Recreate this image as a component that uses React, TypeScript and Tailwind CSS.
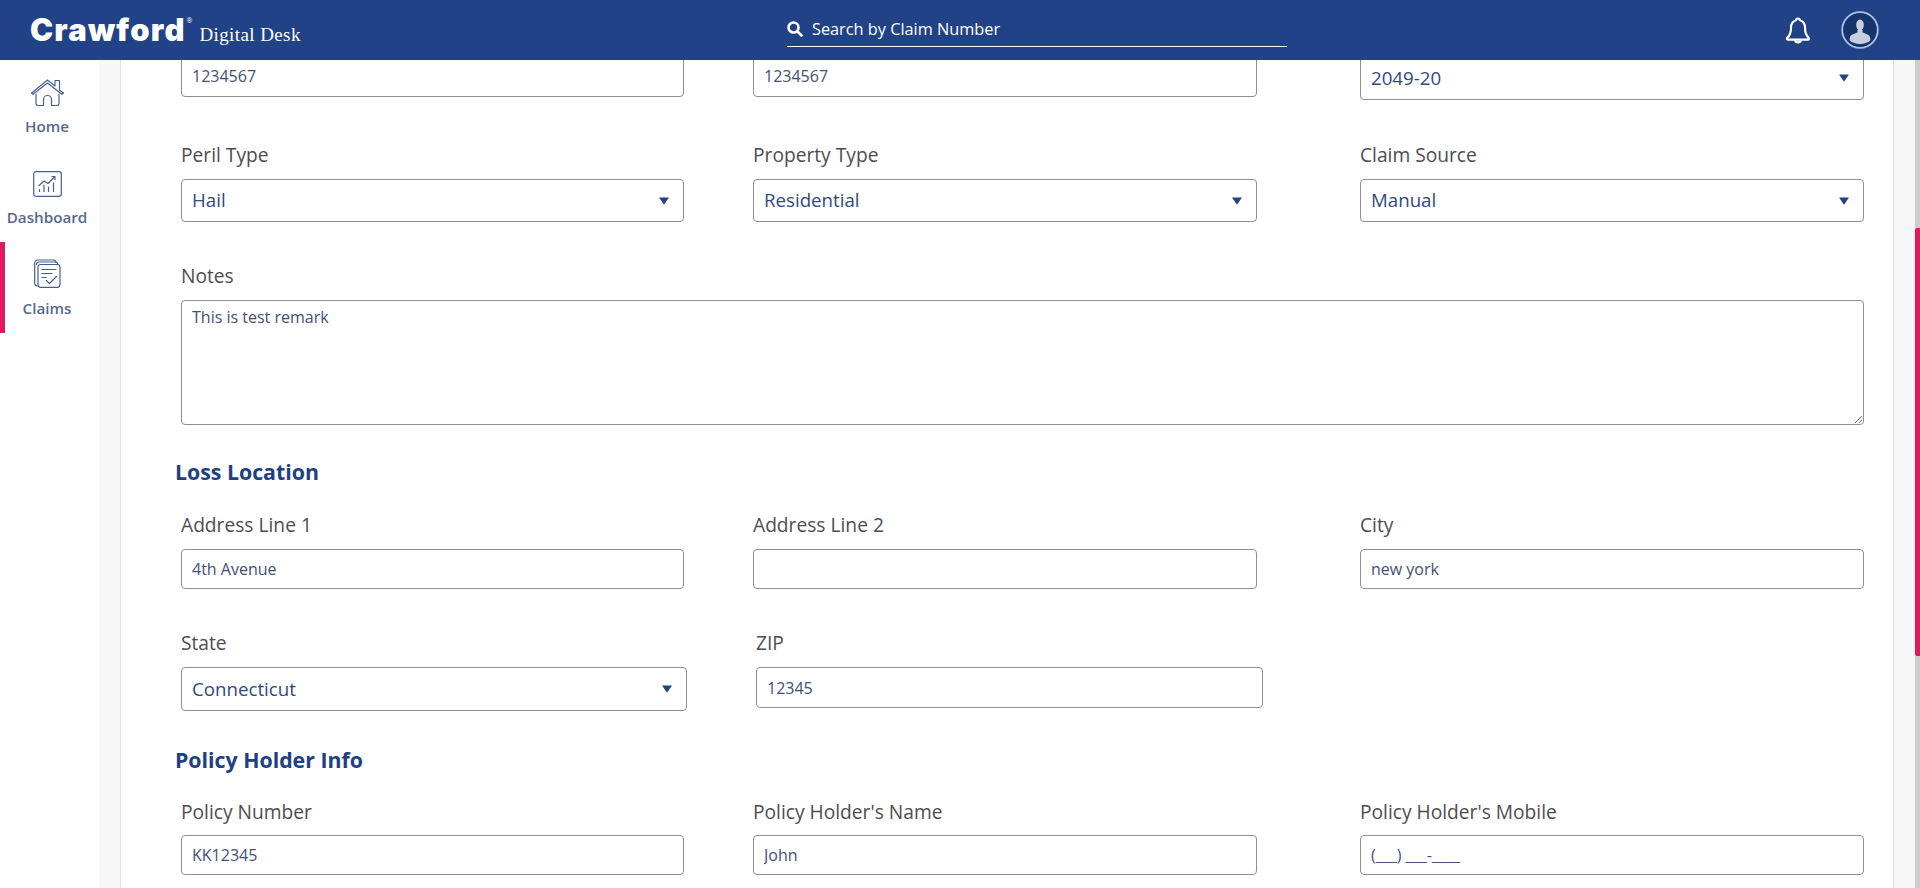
import type { FC, ReactNode } from 'react'

const Caret: FC = () => (
  <svg className="h-[8px] w-[10px] fill-[#21437f]" viewBox="0 0 10 8">
    <path d="M0 .5h10L5 7.800z" />
  </svg>
)

const Label: FC<{ children: ReactNode; className?: string }> = ({ children, className = '' }) => (
  <div className={`text-[19.2px] leading-[24px] text-[#4d4d4f] ${className}`}>{children}</div>
)

const TextBox: FC<{ value: string; className?: string }> = ({ value, className = 'h-[40px] w-[503px]' }) => (
  <input
    readOnly
    value={value}
    className={`block rounded-[4px] border border-[#8e8e8e] bg-white px-[10px] text-[16px] text-[#3f5079] outline-none ${className}`}
  />
)

const SelectBox: FC<{ value: string; className?: string }> = ({ value, className = 'h-[43px] w-[503px]' }) => (
  <div className={`flex items-center justify-between rounded-[4px] border border-[#8e8e8e] bg-white pl-[10px] pr-[14px] ${className}`}>
    <span className="text-[18.7px] text-[#2f4a80]">{value}</span>
    <Caret />
  </div>
)

const SectionTitle: FC<{ children: ReactNode; className?: string }> = ({ children, className = '' }) => (
  <h2 className={`-ml-[6px] text-[21.3px] leading-[28px] font-bold text-[#21407f] ${className}`}>{children}</h2>
)

const HomeIcon: FC = () => (
  <svg className="h-[27px] w-[33px] fill-none stroke-[#4a5e8c]" strokeWidth="1.200" viewBox="0 0 33 27" strokeLinejoin="round" strokeLinecap="round">
    <path d="M.7 14 16.500 1l7.500 6V1.500h4.500V11l3.800 3" />
    <path d="M.7 14l1.300 1.300L16.500 4l14.500 11.300 1.300-1.300" />
    <path d="M5 15v9.500a2 2 0 0 0 2 2h5.500v-6a4 4 0 0 1 8 0v6H26a2 2 0 0 0 2-2V15" />
  </svg>
)

const DashboardIcon: FC = () => (
  <svg className="h-[26px] w-[29px] fill-none stroke-[#4a5e8c]" strokeWidth="1.200" viewBox="0 0 29 26" strokeLinecap="round" strokeLinejoin="round">
    <rect x="0.700" y="0.700" width="27.600" height="24.600" rx="2.500" />
    <path d="M6 14.500 11 10l4 2.500L21.500 6" />
    <path d="M19 5.500h3v3" />
    <path d="M6.500 20.500v-2M11 20.500v-6.500M15.500 20.500v-4.500M20.500 20.500v-8.500" />
  </svg>
)

const ClaimsIcon: FC = () => (
  <svg className="h-[29px] w-[27px] fill-none stroke-[#4a5e8c]" strokeWidth="1.200" viewBox="0 0 27 29" strokeLinecap="round" strokeLinejoin="round">
    <path d="M3.500 27A3 3 0 0 1 .7 24V4A3 3 0 0 1 3.700 1h15.500a3 3 0 0 1 3 2.500" />
    <path d="M2.500 5.500A2.500 2.500 0 0 1 5 3h16a3 3 0 0 1 3 2.500" />
    <rect x="4" y="5.500" width="22" height="22.800" rx="2.500" />
    <path d="M8 10.500h14M8 14.500h10M8 18.500h4" />
    <path d="M12.500 21.500l3 3 7-7" />
  </svg>
)

const BellIcon: FC = () => (
  <svg className="h-[28px] w-[26px] fill-none stroke-white" strokeWidth="2.200" viewBox="0 0 26 28" strokeLinejoin="round" strokeLinecap="round">
    <path d="M13 2.500c-1.200 0-1.800.8-1.900 1.700C7.600 5.200 6 8 6 11.500c0 5-1.100 8-3.600 10.200-.9.8-.4 2 .7 2h19.800c1.100 0 1.600-1.200.7-2C21.100 19.500 20 16.500 20 11.500c0-3.500-1.600-6.300-5.100-7.300-.1-.9-.7-1.700-1.900-1.700z" />
    <path d="M10 24c.3 1.500 1.500 2.300 3 2.300s2.700-.8 3-2.300" />
  </svg>
)

const AvatarIcon: FC = () => (
  <svg className="h-[38px] w-[38px]" viewBox="0 0 38 38">
    <circle cx="19" cy="19" r="17.800" fill="#17356a" stroke="#a9c1e6" strokeWidth="1.800" />
    <ellipse cx="19" cy="14" rx="3.800" ry="5.500" fill="#c6cfdd" />
    <path d="M16.500 19h5v2.500c2.500 1 6.500 1.800 7.500 4.500.3 1 .3 2.500.3 3.500-2.400 2.200-6.300 3.500-10.300 3.500s-7.900-1.300-10.300-3.500c0-1 0-2.500.3-3.500 1-2.700 5-3.500 7.500-4.500z" fill="#c6cfdd" />
  </svg>
)

const NavItem: FC<{ icon: ReactNode; label: string; active?: boolean }> = ({ icon, label, active }) => (
  <div className={`flex h-[91px] flex-col items-center border-l-[5px] pr-[10px] ${active ? 'border-[#e0185c]' : 'border-transparent'}`}>
    <div className="flex h-[46px] items-end justify-center">{icon}</div>
    <span className="mt-[10px] text-[15.2px] leading-[20px] font-semibold text-[#56688f]">{label}</span>
  </div>
)

export default function App() {
  return (
    <div className="flex h-[888px] w-full flex-col overflow-hidden bg-white font-['Open_Sans',sans-serif]">
      {/* Header */}
      <header className="z-10 flex h-[60px] shrink-0 items-center bg-[#214286] text-white">
        <div className="flex w-[787px] items-baseline pl-[30px]">
          <span className="font-['Inter',sans-serif] text-[31px] leading-[36px] font-black tracking-[1.2px]">Crawford</span>
          <span className="ml-[1px] -translate-y-[18px] text-[7px] leading-[8px]">®</span>
          <span className="ml-[7px] font-['Liberation_Serif',serif] text-[19px] leading-[24px] tracking-[0.4px]">Digital Desk</span>
        </div>
        <div className="flex h-[47px] w-[500px] items-center gap-[9px] self-start border-b border-white pt-[12px]">
          <svg className="h-[16px] w-[16px] fill-none stroke-white" strokeWidth="2.600" viewBox="0 0 16 16" strokeLinecap="round">
            <circle cx="6.500" cy="6.500" r="5" />
            <path d="M10.500 10.500 14.500 14.500" />
          </svg>
          <span className="text-[16.3px]">Search by Claim Number</span>
        </div>
        <div className="ml-auto flex items-center gap-[30px] pr-[41px]">
          <BellIcon />
          <AvatarIcon />
        </div>
      </header>

      <div className="flex min-h-0 flex-1">
        {/* Sidebar */}
        <nav className="flex w-[99px] shrink-0 flex-col bg-white">
          <NavItem icon={<HomeIcon />} label="Home" />
          <NavItem icon={<DashboardIcon />} label="Dashboard" />
          <NavItem icon={<ClaimsIcon />} label="Claims" active />
        </nav>

        {/* Form */}
        <div className="flex min-w-0 flex-1 bg-[#f7f7f7] px-[21px]">
          <main className="min-w-0 flex-1 overflow-hidden border-x border-[#e2e2e2] bg-white pl-[60px]">
            <div className="-mt-[7px]">
              <div className="flex">
                <TextBox value="1234567" className="h-[44px] w-[503px] pt-[2px]" />
                <TextBox value="1234567" className="ml-[69px] h-[44px] w-[504px] pt-[2px]" />
                <SelectBox value="2049-20" className="ml-[103px] h-[47px] w-[504px] pt-[3px]" />
              </div>

              <div className="mt-[43px] flex">
                <div className="w-[572px]">
                  <Label>Peril Type</Label>
                  <SelectBox value="Hail" className="mt-[12px] h-[43px] w-[503px]" />
                </div>
                <div className="w-[607px]">
                  <Label>Property Type</Label>
                  <SelectBox value="Residential" className="mt-[12px] h-[43px] w-[504px]" />
                </div>
                <div>
                  <Label>Claim Source</Label>
                  <SelectBox value="Manual" className="mt-[12px] h-[43px] w-[504px]" />
                </div>
              </div>

              <Label className="mt-[42px]">Notes</Label>
              <textarea
                readOnly
                value="This is test remark"
                className="mt-[12px] block h-[125px] w-[1683px] rounded-[4px] border border-[#8e8e8e] bg-white px-[10px] py-[4px] text-[16px] leading-[24px] text-[#3f5079] outline-none"
              />

              <SectionTitle className="mt-[33px]">Loss Location</SectionTitle>
              <div className="mt-[27px] flex">
                <div className="w-[572px]">
                  <Label>Address Line 1</Label>
                  <TextBox value="4th Avenue" className="mt-[12px] h-[40px] w-[503px]" />
                </div>
                <div className="w-[607px]">
                  <Label>Address Line 2</Label>
                  <TextBox value="" className="mt-[12px] h-[40px] w-[504px]" />
                </div>
                <div>
                  <Label>City</Label>
                  <TextBox value="new york" className="mt-[12px] h-[40px] w-[504px]" />
                </div>
              </div>

              <div className="mt-[42px] flex">
                <div className="w-[575px]">
                  <Label>State</Label>
                  <SelectBox value="Connecticut" className="mt-[12px] h-[44px] w-[506px]" />
                </div>
                <div>
                  <Label>ZIP</Label>
                  <TextBox value="12345" className="mt-[12px] h-[41px] w-[507px]" />
                </div>
              </div>

              <SectionTitle className="mt-[35px]">Policy Holder Info</SectionTitle>
              <div className="mt-[26px] flex">
                <div className="w-[572px]">
                  <Label>Policy Number</Label>
                  <TextBox value="KK12345" className="mt-[11px] h-[40px] w-[503px]" />
                </div>
                <div className="w-[607px]">
                  <Label>Policy Holder's Name</Label>
                  <TextBox value="John" className="mt-[11px] h-[40px] w-[504px]" />
                </div>
                <div>
                  <Label>Policy Holder's Mobile</Label>
                  <TextBox value="(___) ___-____" className="mt-[11px] h-[40px] w-[504px]" />
                </div>
              </div>
            </div>
          </main>
        </div>

        {/* Scrollbar */}
        <div className="w-[5px] shrink-0 bg-[#cdcdcd] pt-[168px]">
          <div className="h-[428px] rounded-l-[2px] bg-[#e0185c]" />
        </div>
      </div>
    </div>
  )
}
